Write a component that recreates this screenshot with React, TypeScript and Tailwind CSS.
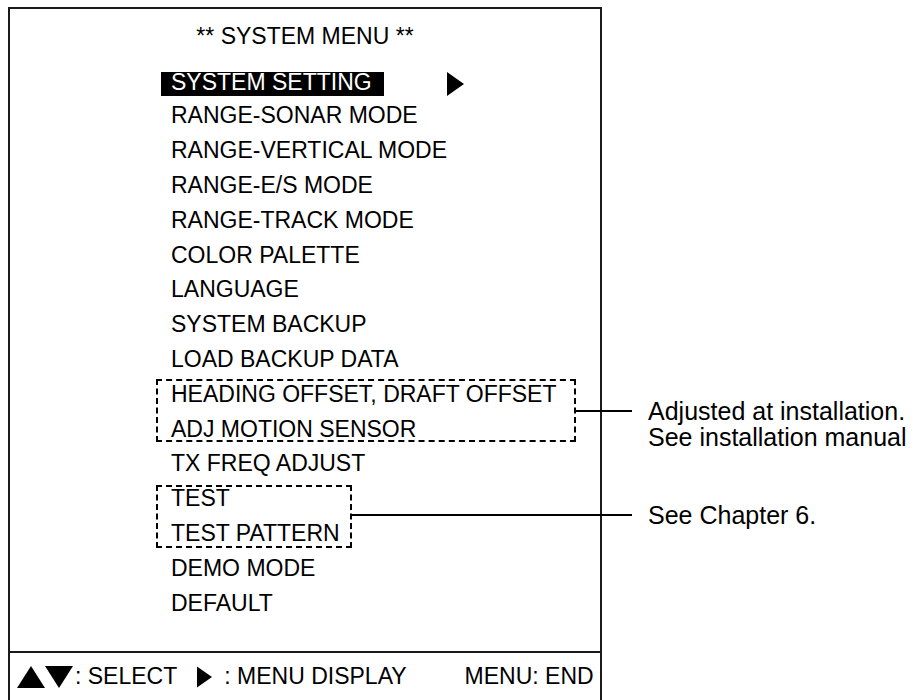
const menuItems = [
  "RANGE-SONAR MODE",
  "RANGE-VERTICAL MODE",
  "RANGE-E/S MODE",
  "RANGE-TRACK MODE",
  "COLOR PALETTE",
  "LANGUAGE",
  "SYSTEM BACKUP",
  "LOAD BACKUP DATA",
];

const Row = ({ children }: { children: React.ReactNode }) => (
  <div className="h-[34.8px] pl-[10px] leading-[34.8px] whitespace-nowrap">{children}</div>
);

const TriRight = ({ className }: { className?: string }) => (
  <svg viewBox="0 0 17 24" className={className}>
    <polygon points="0,0 17,12 0,24" fill="#000" />
  </svg>
);

const TriUp = () => (
  <svg viewBox="0 0 28 22" className="h-[22px] w-[28px]">
    <polygon points="14,0 28,22 0,22" fill="#000" />
  </svg>
);

const TriDown = () => (
  <svg viewBox="0 0 28 22" className="h-[22px] w-[28px]">
    <polygon points="0,0 28,0 14,22" fill="#000" />
  </svg>
);

export default function App() {
  return (
    <div className="relative h-[700px] w-[913px] overflow-hidden bg-white font-['Liberation_Sans',Arial,sans-serif] text-[23px] text-black">
      <div className="ml-[8px] mt-[7px] flex h-[693px] w-[594px] flex-col border-2 border-b-0 border-[#1a1a1a]">
        <div className="pt-[14px] text-center leading-[26px]">** SYSTEM MENU **</div>

        {/* menu list */}
        <div className="mt-[14.6px] pl-[151px]">
          <div className="flex h-[34.8px] items-start">
            <span className="mt-[8px] inline-block bg-black pb-[4px] pl-[10px] pr-[12px] leading-[20px] text-white">
              SYSTEM SETTING
            </span>
            <TriRight className="ml-[63px] mt-[8px] h-[24px] w-[17px]" />
          </div>
          {menuItems.map((m) => (
            <Row key={m}>{m}</Row>
          ))}

          <div className="relative">
            <div className="absolute bottom-[4px] left-[-5px] top-[2px] w-[420px] border-2 border-dashed border-black" />
            <div className="absolute left-[415px] top-[33px] h-[2px] w-[56px] bg-black" />
            <div className="absolute left-[487px] top-[21px] whitespace-nowrap text-[25px] leading-[26px]">
              Adjusted at installation.
              <br />
              See installation manual
            </div>
            <Row>HEADING OFFSET, DRAFT OFFSET</Row>
            <Row>ADJ MOTION SENSOR</Row>
          </div>

          <Row>TX FREQ ADJUST</Row>

          <div className="relative">
            <div className="absolute bottom-[3px] left-[-5px] top-[4px] w-[196px] border-2 border-dashed border-black" />
            <div className="absolute left-[191px] top-[33px] h-[2px] w-[280px] bg-black" />
            <div className="absolute left-[487px] top-[21px] whitespace-nowrap text-[25px] leading-[26px]">See Chapter 6.</div>
            <Row>TEST</Row>
            <Row>TEST PATTERN</Row>
          </div>

          <Row>DEMO MODE</Row>
          <Row>DEFAULT</Row>
        </div>

        <div className="flex-1" />

        {/* key guide */}
        <div className="flex h-[49px] items-center border-t-2 border-[#1a1a1a] pl-[7px] whitespace-nowrap">
          <TriUp />
          <TriDown />
          <span className="ml-[2px]">: SELECT</span>
          <TriRight className="ml-[20px] h-[24px] w-[15px]" />
          <span className="ml-[12px]">: MENU DISPLAY</span>
          <span className="ml-[58px]">MENU: END</span>
        </div>
      </div>
    </div>
  );
}
